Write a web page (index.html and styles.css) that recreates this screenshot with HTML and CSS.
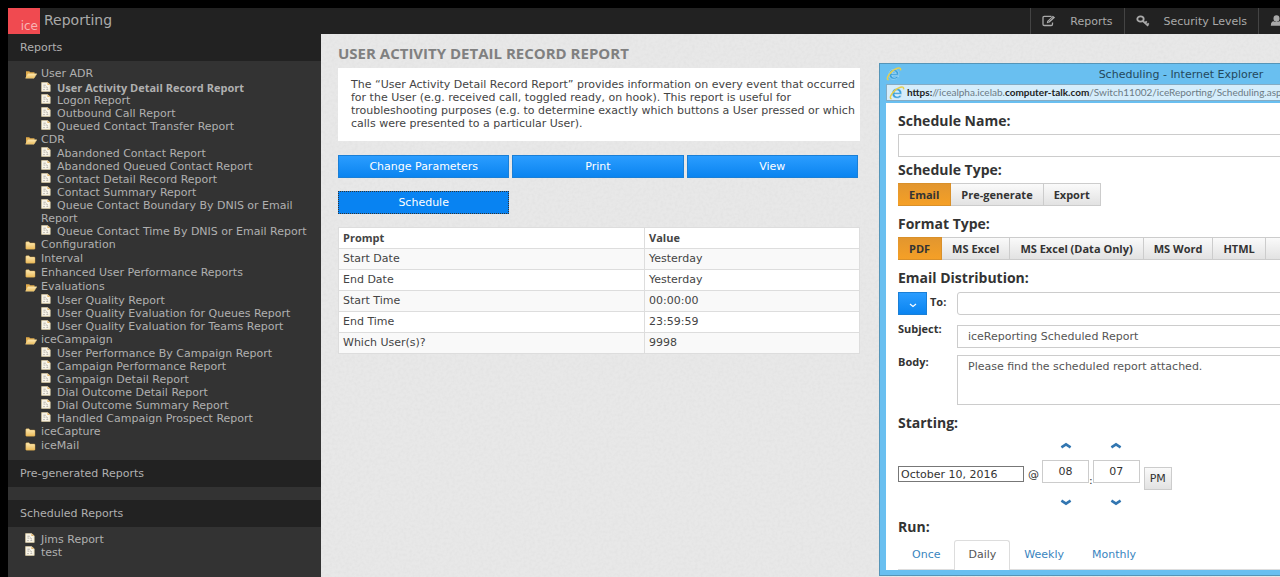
FILE: index.html
```html
<!DOCTYPE html>
<html lang="en">
<head>
<meta charset="utf-8">
<title>ice Reporting</title>
<link rel="stylesheet" href="styles.css">
</head>
<body>
<svg class="defs" aria-hidden="true">
  <defs>
    <linearGradient id="gold" x1="0" y1="0" x2="0" y2="1"><stop offset="0" stop-color="#fdeab4"/><stop offset="1" stop-color="#ecbc5c"/></linearGradient>
    <symbol id="open" viewBox="0 0 12 9"><path d="M1 8V1.2h3.2l1 1.1h4.3V4" fill="#e0ab4c"/><path d="M0.6 8.2 3 3.8h8.8L9 8.2z" fill="url(#gold)" stroke="#f3d48c" stroke-width=".5"/></symbol>
    <symbol id="closed" viewBox="0 0 12 9"><path d="M.8 1.6q0-.8.8-.8h2.4l1 1.200h4.200q.8 0 .8.8v4.600q0 .8-.8.8H1.600q-.8 0-.8-.8z" fill="url(#gold)" stroke="#e0ab4c" stroke-width=".4"/></symbol>
    <symbol id="doc" viewBox="0 0 10 10"><path d="M.6.6h6l2.600 2.200v6.600H.6z" fill="#faf6ea" stroke="#e0d0a6" stroke-width=".7"/><path d="M6.400.6v2.400h2.800" fill="#e0b36a"/><path d="M2.400 3.200h2.400M2.400 5l2 .2M2.200 7.600h1.600M5 4.600l2 1.600M5.400 7.400h1.800" stroke="#a5a19a" stroke-width=".8" fill="none"/></symbol>
    <symbol id="ie" viewBox="0 0 16 14"><path d="M12.800 8.200H5.600q.3 2.200 2.600 2.200 1.500 0 2.100-1h2.300Q11.600 12.300 8 12.300 3 12.200 3 7.300 3.200 2.500 8 2.400q5 .2 4.800 5.800zM5.700 6.500h4.700Q10 4.400 8 4.400 6 4.500 5.700 6.500z" fill="#3aa0dc" stroke="#e2f3fc" stroke-width=".4"/><path d="M2.600 12.800Q0 12.400 2.700 8.200 6 3 11.400 1.200q4-1 3 2.200" fill="none" stroke="#e5cf4e" stroke-width="1.500"/></symbol>
    <symbol id="up" viewBox="0 0 12 7"><path d="M1.400 5.400 6 2.400l4.600 3" fill="none" stroke="#3276b1" stroke-width="2.600"/></symbol>
    <symbol id="down" viewBox="0 0 12 7"><path d="M1.400 1.600 6 4.600l4.600-3" fill="none" stroke="#3276b1" stroke-width="2.600"/></symbol>
  </defs>
</svg>
<div class="app">
  <header class="topbar">
    <div class="logo">ice</div>
    <h1 class="brand">Reporting</h1>
    <nav class="nav">
      <a class="nav-item" href="#"><svg width="14" height="12" viewBox="0 0 14 12"><path d="M9.500 1.300H2.300q-1.300 0-1.300 1.300v6.600q0 1.300 1.300 1.300h6.900q1.300 0 1.300-1.300V7.500" fill="none" stroke="#aaa" stroke-width="1.300"/><path d="M4.800 8.300l.4-2.400L10.900.8l2.200 1.800-5.700 5.200z" fill="#aaa"/><path d="M6 6.500 7.400 7.600M7.200 5.700l3.400-3" stroke="#222" stroke-width=".6"/></svg>Reports</a>
      <a class="nav-item" href="#"><svg width="14" height="12" viewBox="0 0 14 12"><ellipse cx="4.500" cy="4" rx="3.200" ry="2.700" fill="none" stroke="#aaa" stroke-width="1.800"/><path d="M6.600 5.800 12.200 10.800M9 8l1.800-1.700M11 10l1.800-1.700" stroke="#aaa" stroke-width="1.800" fill="none"/></svg>Security Levels</a>
      <a class="nav-item nav-user" href="#" aria-label="User"><svg width="13" height="12" viewBox="0 0 13 12"><ellipse cx="6.500" cy="3.600" rx="3" ry="3.300" fill="#aaa"/><path d="M.8 10.800q0-4.600 3-4.600 2.700 1.800 5.400 0 3 0 3 4.600z" fill="#aaa"/></svg></a>
    </nav>
  </header>
  <div class="body">
    <aside class="sidebar">
      <h2 class="side-title">Reports</h2>
      <ul class="tree">
        <li><a class="folder" href="#"><svg class="ic"><use href="#open"/></svg>User ADR</a>
          <ul>
            <li class="leaf current"><svg class="pg"><use href="#doc"/></svg><a href="#">User Activity Detail Record Report</a></li>
            <li class="leaf"><svg class="pg"><use href="#doc"/></svg><a href="#">Logon Report</a></li>
            <li class="leaf"><svg class="pg"><use href="#doc"/></svg><a href="#">Outbound Call Report</a></li>
            <li class="leaf"><svg class="pg"><use href="#doc"/></svg><a href="#">Queued Contact Transfer Report</a></li>
          </ul></li>
        <li><a class="folder" href="#"><svg class="ic"><use href="#open"/></svg>CDR</a>
          <ul>
            <li class="leaf"><svg class="pg"><use href="#doc"/></svg><a href="#">Abandoned Contact Report</a></li>
            <li class="leaf"><svg class="pg"><use href="#doc"/></svg><a href="#">Abandoned Queued Contact Report</a></li>
            <li class="leaf"><svg class="pg"><use href="#doc"/></svg><a href="#">Contact Detail Record Report</a></li>
            <li class="leaf"><svg class="pg"><use href="#doc"/></svg><a href="#">Contact Summary Report</a></li>
            <li class="leaf"><svg class="pg"><use href="#doc"/></svg><a href="#">Queue Contact Boundary By DNIS or Email<br>Report</a></li>
            <li class="leaf"><svg class="pg"><use href="#doc"/></svg><a href="#">Queue Contact Time By DNIS or Email Report</a></li>
          </ul></li>
        <li><a class="folder" href="#"><svg class="ic"><use href="#closed"/></svg>Configuration</a></li>
        <li><a class="folder" href="#"><svg class="ic"><use href="#closed"/></svg>Interval</a></li>
        <li><a class="folder" href="#"><svg class="ic"><use href="#closed"/></svg>Enhanced User Performance Reports</a></li>
        <li><a class="folder" href="#"><svg class="ic"><use href="#open"/></svg>Evaluations</a>
          <ul>
            <li class="leaf"><svg class="pg"><use href="#doc"/></svg><a href="#">User Quality Report</a></li>
            <li class="leaf"><svg class="pg"><use href="#doc"/></svg><a href="#">User Quality Evaluation for Queues Report</a></li>
            <li class="leaf"><svg class="pg"><use href="#doc"/></svg><a href="#">User Quality Evaluation for Teams Report</a></li>
          </ul></li>
        <li><a class="folder" href="#"><svg class="ic"><use href="#open"/></svg>iceCampaign</a>
          <ul>
            <li class="leaf"><svg class="pg"><use href="#doc"/></svg><a href="#">User Performance By Campaign Report</a></li>
            <li class="leaf"><svg class="pg"><use href="#doc"/></svg><a href="#">Campaign Performance Report</a></li>
            <li class="leaf"><svg class="pg"><use href="#doc"/></svg><a href="#">Campaign Detail Report</a></li>
            <li class="leaf"><svg class="pg"><use href="#doc"/></svg><a href="#">Dial Outcome Detail Report</a></li>
            <li class="leaf"><svg class="pg"><use href="#doc"/></svg><a href="#">Dial Outcome Summary Report</a></li>
            <li class="leaf"><svg class="pg"><use href="#doc"/></svg><a href="#">Handled Campaign Prospect Report</a></li>
          </ul></li>
        <li><a class="folder" href="#"><svg class="ic"><use href="#closed"/></svg>iceCapture</a></li>
        <li><a class="folder" href="#"><svg class="ic"><use href="#closed"/></svg>iceMail</a></li>
      </ul>
      <h2 class="side-title">Pre-generated Reports</h2>
      <div class="side-gap"></div>
      <h2 class="side-title">Scheduled Reports</h2>
      <ul class="tree scheduled">
        <li class="leaf"><svg class="pg"><use href="#doc"/></svg><a href="#">Jims Report</a></li>
        <li class="leaf"><svg class="pg"><use href="#doc"/></svg><a href="#">test</a></li>
      </ul>
    </aside>
    <main class="main">
      <svg class="grain" aria-hidden="true"><filter id="noise"><feTurbulence type="fractalNoise" baseFrequency=".35" numOctaves="2"/><feColorMatrix values="0 0 0 0 .5  0 0 0 0 .5  0 0 0 0 .5  .22 0 0 0 -.08"/></filter><rect width="100%" height="100%" filter="url(#noise)"/></svg>
      <div class="report">
        <h2 class="title">USER ACTIVITY DETAIL RECORD REPORT</h2>
        <p class="about">The “User Activity Detail Record Report” provides information on every event that occurred<br>for the User (e.g. received call, toggled ready, on hook). This report is useful for<br>troubleshooting purposes (e.g. to determine exactly which buttons a User pressed or which<br>calls were presented to a particular User).</p>
        <div class="actions">
          <button class="btn" type="button">Change Parameters</button>
          <button class="btn" type="button">Print</button>
          <button class="btn" type="button">View</button>
          <button class="btn focused" type="button">Schedule</button>
        </div>
        <table class="params">
          <thead><tr><th>Prompt</th><th>Value</th></tr></thead>
          <tbody>
            <tr><td>Start Date</td><td>Yesterday</td></tr>
            <tr><td>End Date</td><td>Yesterday</td></tr>
            <tr><td>Start Time</td><td>00:00:00</td></tr>
            <tr><td>End Time</td><td>23:59:59</td></tr>
            <tr><td>Which User(s)?</td><td>9998</td></tr>
          </tbody>
        </table>
      </div>
    </main>
  </div>
</div>

<section class="window" aria-label="Scheduling">
  <div class="win-title"><svg class="ie"><use href="#ie"/></svg><span>Scheduling - Internet Explorer</span></div>
  <div class="address"><svg class="ie"><use href="#ie"/></svg><span><b>https:</b>//icealpha.icelab.<b>computer-talk.com</b>/Switch11002/iceReporting/Scheduling.asp</span></div>
  <form class="sheet">
    <label class="heading" for="name">Schedule Name:</label>
    <input class="text" id="name" type="text">
    <h3 class="heading">Schedule Type:</h3>
    <div class="group">
      <button class="seg on" type="button">Email</button><button class="seg" type="button">Pre-generate</button><button class="seg" type="button">Export</button>
    </div>
    <h3 class="heading">Format Type:</h3>
    <div class="group">
      <button class="seg on" type="button">PDF</button><button class="seg" type="button">MS Excel</button><button class="seg" type="button">MS Excel (Data Only)</button><button class="seg" type="button">MS Word</button><button class="seg" type="button">HTML</button><button class="seg" type="button" aria-label="More formats"></button>
    </div>
    <h3 class="heading">Email Distribution:</h3>
    <div class="mail">
      <div class="to"><button class="drop" type="button" aria-label="Choose recipients"><svg width="8" height="5" viewBox="0 0 8 5"><path d="M1 1l3 2.500L7 1" fill="none" stroke="#fff" stroke-width="1.200"/></svg></button><label for="to">To:</label></div>
      <input class="text rounded" id="to" type="text">
      <label for="subject">Subject:</label>
      <input class="text" id="subject" type="text" value="iceReporting Scheduled Report">
      <label for="body">Body:</label>
      <textarea class="text area" id="body">Please find the scheduled report attached.</textarea>
    </div>
    <h3 class="heading">Starting:</h3>
    <div class="when">
      <input class="date" type="text" value="October 10, 2016" aria-label="Date">
      <span class="at">@</span>
      <div class="spin"><button type="button" aria-label="Hour up"><svg><use href="#up"/></svg></button><input type="text" value="08" aria-label="Hour"><button type="button" aria-label="Hour down"><svg><use href="#down"/></svg></button></div>
      <span class="colon">:</span>
      <div class="spin"><button type="button" aria-label="Minute up"><svg><use href="#up"/></svg></button><input type="text" value="07" aria-label="Minute"><button type="button" aria-label="Minute down"><svg><use href="#down"/></svg></button></div>
      <button class="pm" type="button">PM</button>
    </div>
    <h3 class="heading">Run:</h3>
    <nav class="tabs"><a href="#">Once</a><a class="active" href="#">Daily</a><a href="#">Weekly</a><a href="#">Monthly</a></nav>
  </form>
</section>
</body>
</html>
```
FILE: styles.css
```css
* { box-sizing: border-box; }
html, body { height: 100%; }
body {
  margin: 0;
  background: #000;
  color: #444;
  font: 11px/13px "DejaVu Sans", sans-serif;
  overflow: hidden;
}
h1, h2, h3, p, ul { margin: 0; padding: 0; }
ul { list-style: none; }
a { color: inherit; text-decoration: none; }
button, input, textarea { font: inherit; color: inherit; margin: 0; }
.defs { position: absolute; width: 0; height: 0; }

.app { display: flex; flex-direction: column; min-height: 100vh; padding: 8px 0 0 8px; }
.topbar { display: flex; height: 26px; background: #222; color: #aaa; }
.logo {
  width: 32px;
  padding: 10px 2px 0 0;
  background: #f04a50;
  color: #f8b4b4;
  font-size: 12px;
  line-height: 16px;
  text-align: right;
}
.brand { padding-left: 4px; font-size: 14px; line-height: 24px; font-weight: 400; }
.nav { display: flex; margin-left: auto; }
.nav-item {
  display: flex;
  align-items: center;
  gap: 14px;
  padding: 0 11px;
  border-left: 1px solid #444;
}
.nav-user { width: 22px; overflow: hidden; padding-right: 0; }
.nav-user svg { flex: none; }

.body { display: flex; flex: 1; }
.sidebar { flex: 0 0 313px; background: #333; color: #b0b0b0; }
.side-title {
  padding: 0 12px;
  background: #222;
  font-size: 11px;
  line-height: 27px;
  font-weight: 400;
}
.side-gap { height: 13px; }
.tree { padding: 6px 0 7px 17px; }
.folder { display: flex; align-items: center; gap: 4px; line-height: 14px; }
.ic { width: 12px; height: 9px; }
.leaf { padding-left: 16px; }
.pg { width: 10px; height: 10px; margin-right: 6px; }
.current, .seg, .mail, .params th { font-family: "Open Sans", sans-serif; font-weight: 700; }
.scheduled .leaf { padding-left: 0; }

.main { position: relative; flex: 1; background: #e8e8e8; }
.grain { position: absolute; inset: 0; width: 100%; height: 100%; }
.report { position: relative; width: 539px; padding: 9px 0 0 17px; }
.title { color: #808080; font: 700 15px/20px "Open Sans", sans-serif; }
.about { margin-top: 5px; padding: 10px 0 11px 13px; background: #fff; white-space: nowrap; }
.actions { display: grid; grid-template-columns: repeat(3, 1fr); gap: 13px 3px; margin: 14px 2px 13px 0; }
.btn {
  height: 23px;
  padding: 0;
  border: 1px solid #1a7fd6;
  background: linear-gradient(#2b9dff, #0a84f0);
  color: #fff;
}
.focused { border: 1px dotted #333; background: #0883f2; }
.params { width: 100%; border-collapse: collapse; background: #fff; line-height: 16px; }
.params th, .params td { padding: 2px 4px; border: 1px solid #ddd; text-align: left; }
.params th:first-child { width: 306px; }
.params tbody tr:nth-child(odd) { background: #f9f9f9; }

.window {
  position: absolute;
  top: 63px;
  left: 879px;
  width: 602px;
  padding: 0 6px 5px;
  background: #69bff0;
  border: 1px solid #5595b8;
  color: #333;
}
.win-title { display: flex; align-items: center; height: 20px; color: #24485c; text-align: center; }
.win-title span { flex: 1; margin-right: 14px; }
.ie { width: 16px; height: 14px; flex: none; }
.address {
  display: flex;
  align-items: center;
  gap: 2px;
  height: 17px;
  margin-bottom: 2px;
  padding: 0 2px;
  border: 1px solid #85acc4;
  background: #d5edfb;
  color: #6b7a84;
  font-family: Lato, sans-serif;
  font-size: 10px;
  white-space: nowrap;
}
.address b { color: #222; font-weight: 700; }
.sheet { padding: 7px 12px 0; background: #fff; }
.heading { display: block; margin-bottom: 2px; font: 700 14px/22px "Open Sans", sans-serif; }
.text { display: block; width: 100%; height: 23px; padding: 0 10px; border: 1px solid #ccc; background: #fff; color: #555; }
.rounded { border-radius: 3px; }
.area { height: 50px; padding: 4px 10px; resize: none; }
.text + .heading { margin-top: 2px; }
.group { display: flex; margin-bottom: 7px; }
.seg {
  height: 23px;
  padding: 0 10px;
  border: 1px solid #ccc;
  border-left-width: 0;
  background: linear-gradient(#fafafa, #e2e2e2);
  white-space: nowrap;
}
.group .seg:first-child { padding: 0 11px; }
.on { border-color: #d9902a; background: linear-gradient(#e2962f, #f5a026); }
.mail { display: grid; grid-template-columns: 59px 1fr; row-gap: 7px; margin: 3px 0 7px; }
.mail .text { font-family: "DejaVu Sans", sans-serif; font-weight: 400; }
#subject { margin-top: 3px; }
.to { display: flex; gap: 3px; line-height: 20px; }
.drop { width: 29px; height: 23px; padding: 0; border: 1px solid #1a7fd6; background: linear-gradient(#2b9dff, #0a84f0); }
.when { display: flex; align-items: center; height: 80px; padding-bottom: 4px; }
.date { width: 126px; height: 16px; padding: 0 2px; border: 1px solid #777; }
.at { margin: 0 3px 0 4px; }
.spin { display: flex; flex-direction: column; align-items: center; }
.spin button { display: flex; width: 24px; height: 18px; align-items: center; justify-content: center; padding: 0; border: 0; background: none; }
.spin svg { width: 12px; height: 7px; }
.spin input { width: 47px; height: 23px; margin: 5px 0 11px; padding: 0; border: 1px solid #ccc; text-align: center; }
.colon { padding-top: 12px; }
.pm { height: 23px; margin: 8px 0 0 4px; padding: 0 5px; border: 1px solid #ccc; background: linear-gradient(#fafafa, #e2e2e2); }
.tabs { display: flex; border-bottom: 1px solid #ddd; color: #3a85c0; }
.tabs a { padding: 0 13px; line-height: 28px; border: 1px solid transparent; border-bottom: 0; }
.tabs .active { margin-bottom: -1px; border-color: #ddd; border-radius: 3px 3px 0 0; background: #fff; color: #555; }
```
